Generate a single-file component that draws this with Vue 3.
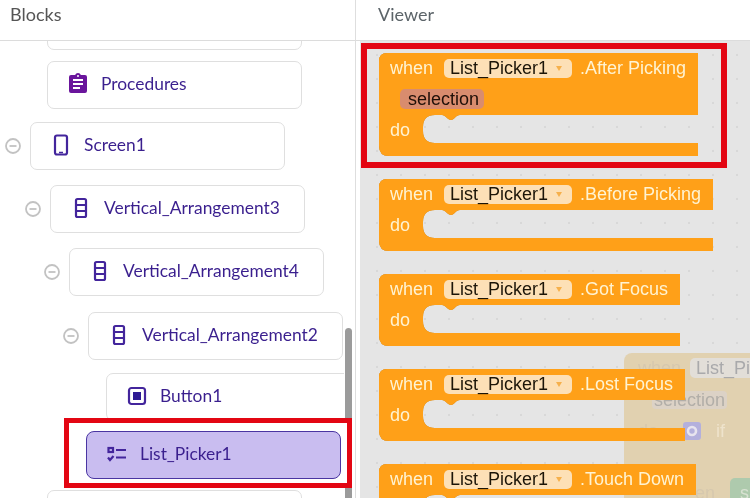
<template>
  <div class="page">
    <section class="blocks-panel">
      <h2 class="panel-title">Blocks</h2>
      <div class="tree">
        <div v-for="row in rows" :key="row.id" class="tree-row" :class="{ picked: row.picked }"
          :style="{ marginTop: row.gap + 'px', marginLeft: row.left + 'px' }">
          <svg v-if="row.toggle" class="toggle" viewBox="0 0 16 16">
            <circle cx="8" cy="8" r="7" />
            <path d="M4.5 8h7" />
          </svg>
          <div v-if="row.picked" class="picked-frame"></div>
          <div class="card">
            <svg v-if="row.icon" class="card-icon" viewBox="0 0 24 24">
              <path v-if="row.icon === 'procedures'" class="fill-purple"
                d="M17,9H7V7H17M17,13H7V11H17M14,17H7V15H14M12,3A1,1 0 0,1 13,4A1,1 0 0,1 12,5A1,1 0 0,1 11,4A1,1 0 0,1 12,3M19,3H14.82C14.4,1.84 13.3,1 12,1C10.7,1 9.6,1.84 9.18,3H5A2,2 0 0,0 3,5V19A2,2 0 0,0 5,21H19A2,2 0 0,0 21,19V5A2,2 0 0,0 19,3Z" />
              <g v-else-if="row.icon === 'phone'" class="stroke-icon">
                <rect x="6" y="2.5" width="12" height="19" rx="2" />
                <path class="thick" d="M10 19.5h4" />
              </g>
              <g v-else-if="row.icon === 'vertical'" class="stroke-icon">
                <rect x="7" y="3" width="10" height="18" rx="1.5" />
                <path d="M7 9h10M7 15h10" />
              </g>
              <g v-else-if="row.icon === 'button'" class="stroke-icon">
                <rect x="4" y="4" width="16" height="16" rx="2.5" />
                <rect class="solid" x="8" y="8" width="8" height="8" />
              </g>
              <g v-else class="stroke-icon">
                <rect x="3.5" y="6" width="4.5" height="4" />
                <path d="M11 8h10M11 15.5h10M3 15.5l2 2.5 3.5-4" />
              </g>
            </svg>
            <span class="card-label">{{ row.label }}</span>
          </div>
        </div>
        <div class="scroll-track"><div class="scroll-thumb"></div></div>
      </div>
    </section>

    <section class="viewer-panel">
      <h2 class="panel-title viewer-title">Viewer</h2>
      <div class="workspace">
        <!-- faded block being dragged, under the list -->
        <div class="ghost">
          <div class="ghost-row">
            <span class="ghost-when">when</span>
            <span class="ghost-pill">List_Pi</span>
          </div>
          <span class="ghost-selection">selection</span>
          <div class="ghost-row ghost-do">
            <span>do</span>
            <svg class="ghost-gear" viewBox="0 0 18 18">
              <rect width="18" height="18" rx="3" fill="#b4b0dc" />
              <circle cx="9" cy="9" r="4" fill="none" stroke="#e8e4ee" stroke-width="2.6" />
            </svg>
            <span class="ghost-if">if</span>
          </div>
          <div class="ghost-row ghost-then">
            <span>en</span>
            <span class="ghost-green">s</span>
          </div>
        </div>

        <div class="block-list">
          <div v-for="block in blocks" :key="block.event" class="block" :style="{ width: block.width + 'px' }">
            <svg class="block-shape" :width="block.width" :height="block.param ? 103 : 72">
              <path :d="blockPath(block)" />
            </svg>
            <div class="block-head">
              <div class="block-row">
                <span class="word">when</span>
                <span class="dropdown">List_Picker1<i class="arrow"></i></span>
                <span class="word event">.{{ block.event }}</span>
              </div>
              <span v-if="block.param" class="param">{{ block.param }}</span>
            </div>
            <div class="do-row"><span class="word">do</span></div>
          </div>
        </div>
        <div class="viewer-frame"></div>
      </div>
    </section>
  </div>
</template>

<script setup>
const rows = [
  { id: 'top', label: '', left: 47, gap: -39 },
  { id: 'procedures', label: 'Procedures', icon: 'procedures', left: 47, gap: 11 },
  { id: 'screen', label: 'Screen1', icon: 'phone', toggle: true, left: 5, gap: 13 },
  { id: 'va3', label: 'Vertical_Arrangement3', icon: 'vertical', toggle: true, left: 25, gap: 15 },
  { id: 'va4', label: 'Vertical_Arrangement4', icon: 'vertical', toggle: true, left: 44, gap: 15 },
  { id: 'va2', label: 'Vertical_Arrangement2', icon: 'vertical', toggle: true, left: 63, gap: 16 },
  { id: 'button', label: 'Button1', icon: 'button', left: 106, gap: 13 },
  { id: 'picker', label: 'List_Picker1', icon: 'list', left: 86, gap: 10, picked: true },
  { id: 'next', label: '', left: 47, gap: 11 }
];

const blocks = [
  { event: 'After Picking', width: 319, param: 'selection' },
  { event: 'Before Picking', width: 334 },
  { event: 'Got Focus', width: 301 },
  { event: 'Lost Focus', width: 306 },
  { event: 'Touch Down', width: 317 }
];

const blockPath = (block) => {
  const arm = block.param ? 62 : 31;
  const slot = arm + 28;
  const end = slot + 13;
  const w = block.width;
  return `M8 0H${w}V${arm}H81c-4 0-6 5-9 5s-6-5-9-5H56Q44 ${arm} 44 ${arm + 12}V${slot - 12}Q44 ${slot} 56 ${slot}H${w}V${end}H10Q0 ${end} 0 ${end - 10}V8Q0 0 8 0Z`;
};
</script>

<style scoped>
.page {
  display: flex;
  width: 750px;
  height: 498px;
  overflow: hidden;
  background: #fff;
  filter: blur(0.35px);
}

.panel-title {
  height: 40px;
  margin: 0;
  padding-left: 10px;
  box-sizing: content-box;
  border-bottom: 1px solid #dcdcdc;
  font-family: Lato, "Liberation Sans", sans-serif;
  font-size: 18px;
  font-weight: 400;
  line-height: 28px;
  color: #555;
}

.blocks-panel {
  width: 355px;
  flex-shrink: 0;
  border-right: 1px solid #dedede;
}

.tree {
  position: relative;
  height: 457px;
  overflow: hidden;
}

.tree-row {
  position: relative;
  display: flex;
  align-items: center;
  gap: 9px;
}

.toggle {
  width: 16px;
  height: 16px;
  flex-shrink: 0;
  fill: none;
  stroke: #c2c2c2;
  stroke-width: 1.8;
}

.card {
  display: flex;
  align-items: center;
  gap: 11px;
  width: 255px;
  height: 48px;
  flex-shrink: 0;
  box-sizing: border-box;
  padding: 0 0 3px 18px;
  background: #fff;
  border: 1px solid #dfdfdf;
  border-radius: 7px;
}

.card-icon {
  width: 24px;
  height: 24px;
  flex-shrink: 0;
}

.card-label {
  font-family: Lato, "Liberation Sans", sans-serif;
  font-size: 17.4px;
  color: #3a1f8e;
}

.fill-purple {
  fill: #6a159c;
}

.stroke-icon {
  fill: none;
  stroke: #43259c;
  stroke-width: 2.2;
}

.stroke-icon .thick {
  stroke-width: 1.5;
}

.stroke-icon .solid {
  fill: #2e1a94;
  stroke: none;
}

.picked {
  z-index: 3;
}

.picked .card {
  position: relative;
  background: #c9bdf0;
  border: 1.5px solid #4a35a2;
  border-radius: 8px;
}

.picked-frame {
  position: absolute;
  top: -13px;
  left: -22px;
  width: 288px;
  height: 70px;
  box-sizing: border-box;
  background: #fff;
  border: 5px solid #e30613;
}

.scroll-track {
  position: absolute;
  top: 0;
  right: 0;
  bottom: 0;
  width: 11px;
  background: #fff;
}

.scroll-thumb {
  width: 7px;
  height: 200px;
  margin-top: 287px;
  margin-left: 1px;
  background: #9b9b9b;
  border-radius: 4px;
}

.viewer-panel {
  flex: 1;
  min-width: 0;
}

.viewer-title {
  padding-left: 22px;
  color: #5c6469;
}

.workspace {
  position: relative;
  height: 457px;
  margin-left: 4px;
  overflow: hidden;
  background-color: #e5e5e5;
  background-image: radial-gradient(circle, #d8d8d8 1px, transparent 1.6px);
  background-size: 24px 24px;
  background-position: 5px 2px;
}

.block-list {
  position: relative;
  display: flex;
  flex-direction: column;
  gap: 23px;
  padding: 12px 0 0 19px;
}

.block {
  position: relative;
  flex-shrink: 0;
  font-family: "Liberation Sans", Arial, sans-serif;
  font-size: 18px;
  line-height: 19px;
}

.block-shape {
  position: absolute;
  top: 0;
  left: 0;
  overflow: visible;
  fill: #ffa018;
  filter: drop-shadow(0.6px 0.8px 0 #b97c20);
}

.block-head {
  position: relative;
  display: flex;
  flex-direction: column;
  align-items: flex-start;
  gap: 11px;
  padding: 6px 0 6px 11px;
}

.block-row {
  display: flex;
  align-items: center;
  white-space: nowrap;
}

.word {
  color: #fff3d2;
}

.event {
  margin-left: 8px;
}

.dropdown {
  display: flex;
  align-items: center;
  width: 128px;
  height: 19px;
  box-sizing: border-box;
  margin-left: 11px;
  padding-left: 6px;
  background: #fde0b6;
  border-radius: 5px;
  color: #1c1508;
}

.arrow {
  margin-left: 8px;
  border-left: 3.5px solid transparent;
  border-right: 3.5px solid transparent;
  border-top: 5px solid #f6b04c;
}

.param {
  height: 20px;
  margin-left: 10px;
  padding: 0 5px 0 8px;
  background: #d98c6e;
  border-radius: 5px;
  line-height: 20px;
  color: #1f0f08;
}

.do-row {
  position: relative;
  display: flex;
  align-items: center;
  height: 28px;
  padding: 2px 0 0 11px;
  box-sizing: border-box;
  margin-bottom: 13px;
}

.viewer-frame {
  position: absolute;
  top: 2px;
  left: 1px;
  width: 366px;
  height: 125px;
  box-sizing: border-box;
  border: 6px solid #e30613;
}

.ghost {
  position: absolute;
  top: 312px;
  left: 264px;
  width: 126px;
  height: 145px;
  padding: 5px 0 0 14px;
  background: #e1d1b0;
  border-radius: 8px 0 0 0;
  font-family: "Liberation Sans", Arial, sans-serif;
  font-size: 18px;
  line-height: 20px;
  color: #d6c8ae;
}

.ghost-row {
  display: flex;
  align-items: center;
  white-space: nowrap;
}

.ghost-pill {
  margin-left: 9px;
  padding: 0 6px;
  background: #e2ded8;
  border-radius: 5px;
  color: #a9a9ab;
}

.ghost-selection {
  display: inline-block;
  margin: 13px 0 0 14px;
  padding: 0 2px;
  background: #dcd2c6;
  border-radius: 4px;
  line-height: 18px;
  color: #b2aea8;
}

.ghost-do {
  margin-top: 11px;
}

.ghost-gear {
  width: 18px;
  height: 18px;
  margin-left: 25px;
}

.ghost-if {
  margin-left: 15px;
  color: #eee3cc;
}

.ghost-then {
  margin-top: 37px;
  padding-left: 57px;
}

.ghost-green {
  width: 40px;
  height: 30px;
  box-sizing: border-box;
  margin-left: 15px;
  padding: 5px 0 0 10px;
  background: #aecaad;
  border-radius: 5px 0 0 0;
  color: #d8e2d2;
}
</style>

<style>
html,
body {
  margin: 0;
  background: #fff;
}
</style>
